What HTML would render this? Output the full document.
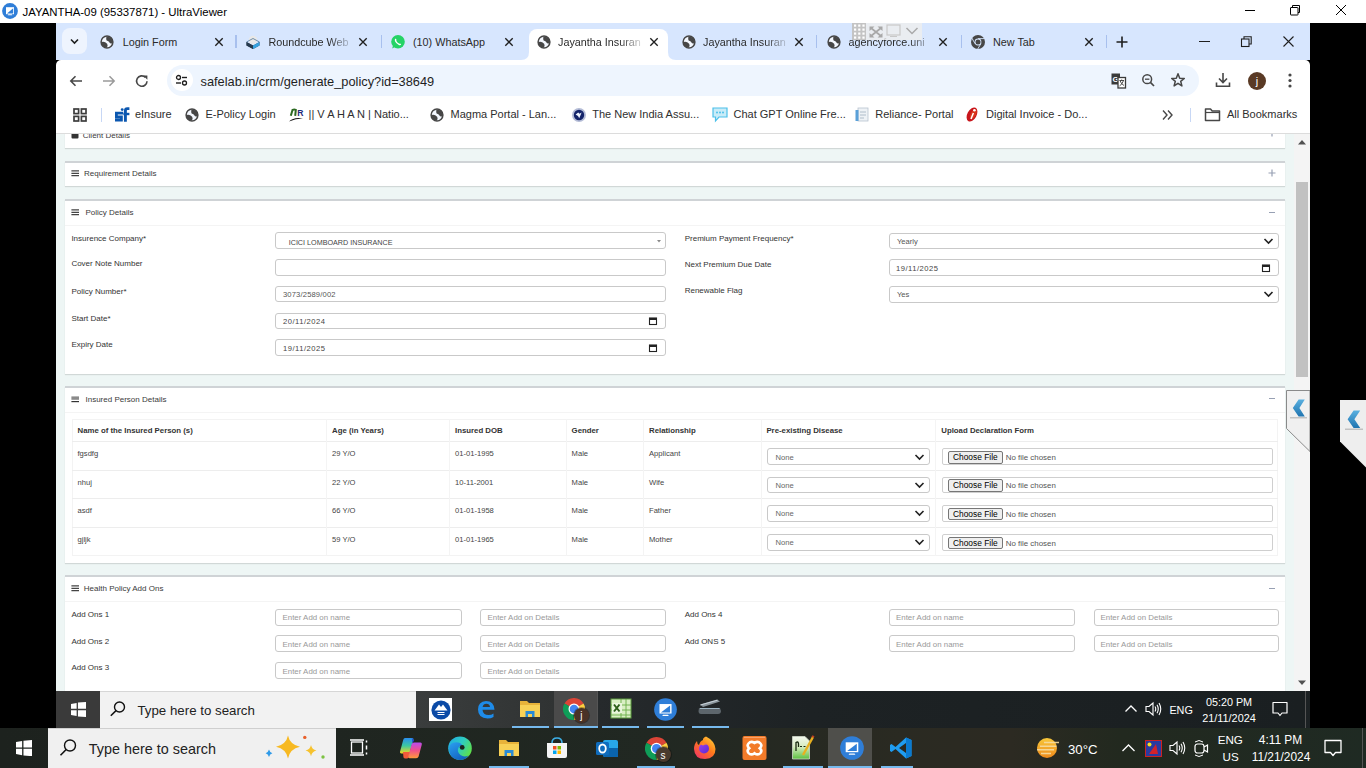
<!DOCTYPE html>
<html><head><meta charset="utf-8"><title>UltraViewer</title>
<style>
html,body{margin:0;padding:0;width:1366px;height:768px;overflow:hidden;background:#000;}
body{position:relative;font-family:"Liberation Sans", sans-serif;}
div,svg{font-family:"Liberation Sans", sans-serif;}
</style></head><body>
<div style="position:absolute;left:0px;top:0px;width:1366px;height:23px;background:#ffffff;"></div>
<svg style="position:absolute;left:2px;top:3px;" width="16" height="16" viewBox="0 0 16 16"><circle cx="8" cy="8" r="7.9" fill="#2f7ed8"/><rect x="4" y="4.2" width="8" height="7" fill="#fff"/><path d="M5 10.4 L11.2 5.2 V10.4 Z" fill="#2f7ed8"/><path d="M6.3 11.2 H9.7 L10.3 12.2 H5.7 Z" fill="#fff"/></svg>
<div style="position:absolute;left:22.5px;top:7.00px;font-size:11.4px;line-height:11.4px;color:#000;font-weight:400;white-space:nowrap;">JAYANTHA-09 (95337871) - UltraViewer</div>
<div style="position:absolute;left:1245px;top:9.6px;width:10px;height:1px;background:#000;"></div>
<svg style="position:absolute;left:1289px;top:4px;" width="13" height="13" viewBox="0 0 13 13"><rect x="1.5" y="3.5" width="7.5" height="7.5" fill="none" stroke="#000" stroke-width="1" rx="0.5"/><path d="M3.5 3.5 V1.5 H10.5 V8.5 H9" fill="none" stroke="#000" stroke-width="1"/></svg>
<svg style="position:absolute;left:1335px;top:4px;" width="12" height="12" viewBox="0 0 12 12"><path d="M1 1 L11 11 M11 1 L1 11" stroke="#000" stroke-width="1"/></svg>
<div style="position:absolute;left:0px;top:23px;width:1366px;height:705px;background:#000;"></div>
<div style="position:absolute;left:56px;top:23px;width:1254px;height:37px;background:#d7e6fe;"></div>
<div style="position:absolute;left:62px;top:28px;width:25px;height:26px;background:#eef4fe;border-radius:8px;"></div>
<svg style="position:absolute;left:68px;top:35px;" width="13" height="13" viewBox="0 0 13 13"><path d="M3 4.5 L6.5 8 L10 4.5" fill="none" stroke="#1f1f1f" stroke-width="1.6"/></svg>
<div style="position:absolute;left:529px;top:28.5px;width:139px;height:32px;background:#fff;border-radius:8px 8px 0 0;"></div>
<svg style="position:absolute;left:521px;top:50px;" width="8" height="10" viewBox="0 0 8 10"><path d="M0 10 Q8 10 8 2 V10 Z" fill="#fff"/></svg>
<svg style="position:absolute;left:668px;top:50px;" width="8" height="10" viewBox="0 0 8 10"><path d="M8 10 Q0 10 0 2 V10 Z" fill="#fff"/></svg>
<svg style="position:absolute;left:99px;top:33.5px;" width="16" height="16" viewBox="0 0 16 16"><circle cx="8" cy="8" r="5.9" fill="#f4f8ff" stroke="#474747" stroke-width="1.5"/><path d="M7.4 2.4 Q12.2 2.4 13.8 6.4 Q14 8.4 13.4 9.6 Q11.4 9.6 10.4 8.4 Q9.6 7 8.2 6.8 Q6.8 6.4 7.4 2.4Z" fill="#474747"/><path d="M2.2 8 Q4.8 7.4 6.6 8.4 Q8.6 9.6 8.6 11.2 Q8.4 12.8 7.6 13.8 Q3.6 13.2 2.4 9.8Z" fill="#474747"/></svg>
<div style="position:absolute;left:122.7px;top:37.00px;font-size:10.8px;line-height:10.8px;color:#2a2a2a;font-weight:400;white-space:nowrap;">Login Form</div>
<svg style="position:absolute;left:212.5px;top:35.5px;" width="12" height="12" viewBox="0 0 12 12"><path d="M2.3 2.3 L9.7 9.7 M9.7 2.3 L2.3 9.7" stroke="#1f1f1f" stroke-width="1.35"/></svg>
<svg style="position:absolute;left:245px;top:33.5px;" width="16" height="16" viewBox="0 0 16 16"><path d="M1.5 8 L8 11.5 L14.5 8 L14.5 11.5 L8 15 L1.5 11.5 Z" fill="#2c3e50"/><path d="M8 11.5 L14.5 8 L14.5 11.5 L8 15Z" fill="#37a2e0"/><path d="M1.5 8 L8 11.5 L8 15 L1.5 11.5Z" fill="#263a4e"/><circle cx="8" cy="6" r="4.2" fill="#e8e8e8"/><path d="M1.5 8 L8 4.5 L14.5 8" fill="none" stroke="#1f4f7a" stroke-width="0.6"/></svg>
<div style="position:absolute;left:268.4px;top:37.00px;font-size:10.8px;line-height:10.8px;color:#2a2a2a;font-weight:400;white-space:nowrap;-webkit-mask-image:linear-gradient(90deg,#000 70%,transparent 100%);width:87.0px;overflow:hidden;">Roundcube Web</div>
<svg style="position:absolute;left:357.4px;top:35.5px;" width="12" height="12" viewBox="0 0 12 12"><path d="M2.3 2.3 L9.7 9.7 M9.7 2.3 L2.3 9.7" stroke="#1f1f1f" stroke-width="1.35"/></svg>
<svg style="position:absolute;left:390px;top:33.5px;" width="16" height="16" viewBox="0 0 16 16"><circle cx="8" cy="7.8" r="6.8" fill="#25d366"/><path d="M2.2 14.6 L3.2 10.8 L5.4 12.8 Z" fill="#25d366"/><path d="M5.3 4.6 Q4.4 5.6 5 7.2 Q6.2 9.8 8.8 11 Q10.4 11.6 11.2 10.6 L10.2 9.4 Q9.6 9.8 9 9.5 Q7.2 8.6 6.4 6.9 Q6.2 6.3 6.6 5.8 Z" fill="#fff"/></svg>
<div style="position:absolute;left:413px;top:37.00px;font-size:10.8px;line-height:10.8px;color:#2a2a2a;font-weight:400;white-space:nowrap;">(10) WhatsApp</div>
<svg style="position:absolute;left:502.5px;top:35.5px;" width="12" height="12" viewBox="0 0 12 12"><path d="M2.3 2.3 L9.7 9.7 M9.7 2.3 L2.3 9.7" stroke="#1f1f1f" stroke-width="1.35"/></svg>
<svg style="position:absolute;left:535.6px;top:33.5px;" width="16" height="16" viewBox="0 0 16 16"><circle cx="8" cy="8" r="5.9" fill="#f4f8ff" stroke="#474747" stroke-width="1.5"/><path d="M7.4 2.4 Q12.2 2.4 13.8 6.4 Q14 8.4 13.4 9.6 Q11.4 9.6 10.4 8.4 Q9.6 7 8.2 6.8 Q6.8 6.4 7.4 2.4Z" fill="#474747"/><path d="M2.2 8 Q4.8 7.4 6.6 8.4 Q8.6 9.6 8.6 11.2 Q8.4 12.8 7.6 13.8 Q3.6 13.2 2.4 9.8Z" fill="#474747"/></svg>
<div style="position:absolute;left:558px;top:37.00px;font-size:10.8px;line-height:10.8px;color:#2a2a2a;font-weight:400;white-space:nowrap;-webkit-mask-image:linear-gradient(90deg,#000 70%,transparent 100%);width:87.60000000000002px;overflow:hidden;">Jayantha Insuran</div>
<svg style="position:absolute;left:647.6px;top:35.5px;" width="12" height="12" viewBox="0 0 12 12"><path d="M2.3 2.3 L9.7 9.7 M9.7 2.3 L2.3 9.7" stroke="#1f1f1f" stroke-width="1.35"/></svg>
<svg style="position:absolute;left:681px;top:33.5px;" width="16" height="16" viewBox="0 0 16 16"><circle cx="8" cy="8" r="5.9" fill="#f4f8ff" stroke="#474747" stroke-width="1.5"/><path d="M7.4 2.4 Q12.2 2.4 13.8 6.4 Q14 8.4 13.4 9.6 Q11.4 9.6 10.4 8.4 Q9.6 7 8.2 6.8 Q6.8 6.4 7.4 2.4Z" fill="#474747"/><path d="M2.2 8 Q4.8 7.4 6.6 8.4 Q8.6 9.6 8.6 11.2 Q8.4 12.8 7.6 13.8 Q3.6 13.2 2.4 9.8Z" fill="#474747"/></svg>
<div style="position:absolute;left:703px;top:37.00px;font-size:10.8px;line-height:10.8px;color:#2a2a2a;font-weight:400;white-space:nowrap;-webkit-mask-image:linear-gradient(90deg,#000 70%,transparent 100%);width:87.5px;overflow:hidden;">Jayantha Insuran</div>
<svg style="position:absolute;left:792.5px;top:35.5px;" width="12" height="12" viewBox="0 0 12 12"><path d="M2.3 2.3 L9.7 9.7 M9.7 2.3 L2.3 9.7" stroke="#1f1f1f" stroke-width="1.35"/></svg>
<svg style="position:absolute;left:825.5px;top:33.5px;" width="16" height="16" viewBox="0 0 16 16"><circle cx="8" cy="8" r="5.9" fill="#f4f8ff" stroke="#474747" stroke-width="1.5"/><path d="M7.4 2.4 Q12.2 2.4 13.8 6.4 Q14 8.4 13.4 9.6 Q11.4 9.6 10.4 8.4 Q9.6 7 8.2 6.8 Q6.8 6.4 7.4 2.4Z" fill="#474747"/><path d="M2.2 8 Q4.8 7.4 6.6 8.4 Q8.6 9.6 8.6 11.2 Q8.4 12.8 7.6 13.8 Q3.6 13.2 2.4 9.8Z" fill="#474747"/></svg>
<div style="position:absolute;left:848.4px;top:37.00px;font-size:10.8px;line-height:10.8px;color:#2a2a2a;font-weight:400;white-space:nowrap;-webkit-mask-image:linear-gradient(90deg,#000 70%,transparent 100%);width:87.0px;overflow:hidden;">agencyforce.uni</div>
<svg style="position:absolute;left:937.4px;top:35.5px;" width="12" height="12" viewBox="0 0 12 12"><path d="M2.3 2.3 L9.7 9.7 M9.7 2.3 L2.3 9.7" stroke="#1f1f1f" stroke-width="1.35"/></svg>
<svg style="position:absolute;left:970.4px;top:33.5px;" width="16" height="16" viewBox="0 0 16 16"><circle cx="8" cy="8" r="7" fill="#474747"/><circle cx="8" cy="8" r="3.4" fill="#d7e6fe"/><circle cx="8" cy="8" r="2.5" fill="#474747"/><path d="M8 4.6 L14.6 4.6" stroke="#d7e6fe" stroke-width="0.9"/><path d="M5.1 9.7 L1.7 3.8" stroke="#d7e6fe" stroke-width="0.9"/><path d="M10.9 9.7 L7.6 15.2" stroke="#d7e6fe" stroke-width="0.9"/></svg>
<div style="position:absolute;left:993px;top:37.00px;font-size:10.8px;line-height:10.8px;color:#2a2a2a;font-weight:400;white-space:nowrap;">New Tab</div>
<svg style="position:absolute;left:1082.5px;top:35.5px;" width="12" height="12" viewBox="0 0 12 12"><path d="M2.3 2.3 L9.7 9.7 M9.7 2.3 L2.3 9.7" stroke="#1f1f1f" stroke-width="1.35"/></svg>
<div style="position:absolute;left:235px;top:34.5px;width:1.5px;height:13.5px;background:#a8c0ee;"></div>
<div style="position:absolute;left:380.5px;top:34.5px;width:1.5px;height:13.5px;background:#a8c0ee;"></div>
<div style="position:absolute;left:815.5px;top:34.5px;width:1.5px;height:13.5px;background:#a8c0ee;"></div>
<div style="position:absolute;left:960.5px;top:34.5px;width:1.5px;height:13.5px;background:#a8c0ee;"></div>
<div style="position:absolute;left:1105.5px;top:34.5px;width:1.5px;height:13.5px;background:#a8c0ee;"></div>
<svg style="position:absolute;left:1115px;top:35px;" width="14" height="14" viewBox="0 0 14 14"><path d="M7 1.5 V12.5 M1.5 7 H12.5" stroke="#1f1f1f" stroke-width="1.6"/></svg>
<div style="position:absolute;left:1199px;top:41px;width:11px;height:1px;background:#1f1f1f;"></div>
<svg style="position:absolute;left:1240px;top:35px;" width="13" height="13" viewBox="0 0 13 13"><rect x="1.5" y="4" width="7.5" height="7.5" fill="none" stroke="#1f1f1f" stroke-width="1.1"/><path d="M4 4 V1.8 H11.2 V9 H9" fill="none" stroke="#1f1f1f" stroke-width="1.1"/></svg>
<svg style="position:absolute;left:1282px;top:35px;" width="13" height="13" viewBox="0 0 13 13"><path d="M1.5 1.5 L11.5 11.5 M11.5 1.5 L1.5 11.5" stroke="#1f1f1f" stroke-width="1.1"/></svg>
<div style="position:absolute;left:852px;top:23px;width:70px;height:17px;background:rgba(238,238,238,0.82);"></div>
<svg style="position:absolute;left:852px;top:23px;" width="14" height="17" viewBox="0 0 14 17"><rect x="0" y="0" width="14" height="17" fill="#c4c4c4"/><rect x="2.0" y="1.5" width="2.2" height="2.2" fill="#fff"/><rect x="6.2" y="1.5" width="2.2" height="2.2" fill="#fff"/><rect x="10.4" y="1.5" width="2.2" height="2.2" fill="#fff"/><rect x="2.0" y="5.5" width="2.2" height="2.2" fill="#fff"/><rect x="6.2" y="5.5" width="2.2" height="2.2" fill="#fff"/><rect x="10.4" y="5.5" width="2.2" height="2.2" fill="#fff"/><rect x="2.0" y="9.5" width="2.2" height="2.2" fill="#fff"/><rect x="6.2" y="9.5" width="2.2" height="2.2" fill="#fff"/><rect x="10.4" y="9.5" width="2.2" height="2.2" fill="#fff"/><rect x="2.0" y="13.5" width="2.2" height="2.2" fill="#fff"/><rect x="6.2" y="13.5" width="2.2" height="2.2" fill="#fff"/><rect x="10.4" y="13.5" width="2.2" height="2.2" fill="#fff"/></svg>
<svg style="position:absolute;left:868px;top:24.5px;" width="16" height="14" viewBox="0 0 16 14"><path d="M3 3 L13 11 M13 3 L3 11" stroke="#a8a8a8" stroke-width="1.7"/><path d="M1.5 1.5 H6.5 L1.5 6 Z M14.5 1.5 H9.5 L14.5 6 Z M1.5 12.5 H6.5 L1.5 8 Z M14.5 12.5 H9.5 L14.5 8 Z" fill="#a8a8a8"/></svg>
<svg style="position:absolute;left:886px;top:24px;" width="16" height="14" viewBox="0 0 16 14"><rect x="1" y="1" width="13" height="10" fill="none" stroke="#c8c8c8" stroke-width="1.2"/><path d="M4 12.5 H11" stroke="#c8c8c8" stroke-width="1"/></svg>
<svg style="position:absolute;left:905px;top:26px;" width="14" height="10" viewBox="0 0 14 10"><path d="M1.5 2 L7 7.5 L12.5 2" fill="none" stroke="#aaa" stroke-width="1.5"/></svg>
<div style="position:absolute;left:56px;top:60px;width:1254px;height:73px;background:#ffffff;border-radius:5px 5px 0 0;"></div>
<div style="position:absolute;left:56px;top:133px;width:1254px;height:1px;background:#dcdcdc;"></div>
<svg style="position:absolute;left:68px;top:73px;" width="16" height="16" viewBox="0 0 16 16"><path d="M14 8 H3 M7.5 3.2 L2.8 8 L7.5 12.8" fill="none" stroke="#474747" stroke-width="1.6"/></svg>
<svg style="position:absolute;left:101px;top:73px;" width="16" height="16" viewBox="0 0 16 16"><path d="M2 8 H13 M8.5 3.2 L13.2 8 L8.5 12.8" fill="none" stroke="#9a9a9a" stroke-width="1.5"/></svg>
<svg style="position:absolute;left:134px;top:73px;" width="16" height="16" viewBox="0 0 16 16"><path d="M13 8.2 A5.2 5.2 0 1 1 11.4 4.3" fill="none" stroke="#474747" stroke-width="1.6"/><path d="M9.2 2.6 H13.4 V6.8 Z" fill="#474747"/></svg>
<div style="position:absolute;left:167px;top:65px;width:1032px;height:31px;background:#eef5fe;border-radius:16px;"></div>
<div style="position:absolute;left:170.5px;top:69px;width:22px;height:22px;border-radius:11px;background:#fff;"></div>
<svg style="position:absolute;left:175px;top:74px;" width="14" height="13" viewBox="0 0 14 13"><circle cx="3.5" cy="3.5" r="2" fill="none" stroke="#1f1f1f" stroke-width="1.3"/><path d="M7 3.5 H12" stroke="#1f1f1f" stroke-width="1.4"/><circle cx="9.5" cy="9" r="2" fill="none" stroke="#1f1f1f" stroke-width="1.3"/><path d="M1 9 H6" stroke="#1f1f1f" stroke-width="1.4"/></svg>
<div style="position:absolute;left:200.5px;top:76.00px;font-size:12.8px;line-height:12.8px;color:#1f1f1f;font-weight:400;white-space:nowrap;">safelab.in/crm/generate_policy?id=38649</div>
<svg style="position:absolute;left:1110px;top:72px;" width="18" height="18" viewBox="0 0 18 18"><rect x="1.5" y="1.5" width="8.5" height="11" fill="#3a3a3a"/><text x="2.4" y="10" font-size="8" font-family="Liberation Sans" fill="#fff" font-weight="bold">G</text><rect x="8" y="5.5" width="7.5" height="10.5" fill="#fff" stroke="#3a3a3a" stroke-width="1.3"/><path d="M9.5 8.5 H14 M11.7 7.5 V8.5 M10 8.5 Q11 12 14 13.5 M13.5 8.5 Q12.5 12 9.5 14" fill="none" stroke="#3a3a3a" stroke-width="0.9"/></svg>
<svg style="position:absolute;left:1140px;top:72px;" width="17" height="17" viewBox="0 0 17 17"><circle cx="7.2" cy="7.2" r="4.4" fill="none" stroke="#474747" stroke-width="1.5"/><path d="M5 7.2 H9.4" stroke="#474747" stroke-width="1.3"/><path d="M10.4 10.4 L14 14" stroke="#474747" stroke-width="1.7"/></svg>
<svg style="position:absolute;left:1170px;top:72px;" width="16" height="16" viewBox="0 0 16 16"><path d="M8 1.8 L9.7 6.2 L14.3 6.4 L10.7 9.3 L11.9 13.9 L8 11.3 L4.1 13.9 L5.3 9.3 L1.7 6.4 L6.3 6.2 Z" fill="none" stroke="#474747" stroke-width="1.5" stroke-linejoin="round"/></svg>
<svg style="position:absolute;left:1214px;top:71px;" width="18" height="18" viewBox="0 0 18 18"><path d="M9 2 V11 M5 7.5 L9 11.5 L13 7.5" fill="none" stroke="#474747" stroke-width="1.6"/><path d="M2.5 11.5 V15.2 H15.5 V11.5" fill="none" stroke="#474747" stroke-width="1.6"/></svg>
<div style="position:absolute;left:1248px;top:71.5px;width:18px;height:18px;border-radius:9px;background:#5a3a25;"></div>
<div style="position:absolute;left:957px;width:600px;text-align:center;top:76.00px;font-size:11px;line-height:11px;color:#fff;font-weight:400;white-space:nowrap;">j</div>
<svg style="position:absolute;left:1286px;top:72px;" width="8" height="17" viewBox="0 0 8 17"><circle cx="4" cy="3" r="1.6" fill="#474747"/><circle cx="4" cy="8.5" r="1.6" fill="#474747"/><circle cx="4" cy="14" r="1.6" fill="#474747"/></svg>
<svg style="position:absolute;left:73px;top:108px;" width="14" height="14" viewBox="0 0 14 14"><rect x="1" y="1" width="4.6" height="4.6" fill="none" stroke="#3c3c3c" stroke-width="1.7"/><rect x="8.4" y="1" width="4.6" height="4.6" fill="none" stroke="#3c3c3c" stroke-width="1.7"/><rect x="1" y="8.4" width="4.6" height="4.6" fill="none" stroke="#3c3c3c" stroke-width="1.7"/><rect x="8.4" y="8.4" width="4.6" height="4.6" fill="none" stroke="#3c3c3c" stroke-width="1.7"/></svg>
<div style="position:absolute;left:100.5px;top:108px;width:1.3px;height:14px;background:#c7d7f5;"></div>
<svg style="position:absolute;left:114px;top:107px;" width="16" height="16" viewBox="0 0 16 16"><path d="M9.2 6.2 H2.4 V9.8 H7.4 V13 H1" fill="none" stroke="#0b57b0" stroke-width="2.8"/><path d="M11.4 14.8 V3.6 Q11.4 1.6 13.4 1.6 H15.4" fill="none" stroke="#0b57b0" stroke-width="2.9"/><path d="M9.4 7 H15.4" stroke="#0b57b0" stroke-width="2.4"/><circle cx="8.2" cy="2.6" r="1.4" fill="#0b57b0"/></svg>
<div style="position:absolute;left:134.9px;top:109.00px;font-size:11px;line-height:11px;color:#2e2e2e;font-weight:400;white-space:nowrap;">eInsure</div>
<svg style="position:absolute;left:184.4px;top:106.5px;" width="16" height="16" viewBox="0 0 16 16"><circle cx="8" cy="8" r="5.9" fill="#f4f8ff" stroke="#474747" stroke-width="1.5"/><path d="M7.4 2.4 Q12.2 2.4 13.8 6.4 Q14 8.4 13.4 9.6 Q11.4 9.6 10.4 8.4 Q9.6 7 8.2 6.8 Q6.8 6.4 7.4 2.4Z" fill="#474747"/><path d="M2.2 8 Q4.8 7.4 6.6 8.4 Q8.6 9.6 8.6 11.2 Q8.4 12.8 7.6 13.8 Q3.6 13.2 2.4 9.8Z" fill="#474747"/></svg>
<div style="position:absolute;left:205.4px;top:109.00px;font-size:11px;line-height:11px;color:#2e2e2e;font-weight:400;white-space:nowrap;">E-Policy Login</div>
<svg style="position:absolute;left:287px;top:107px;" width="18" height="16" viewBox="0 0 18 16"><path d="M3.8 8.8 L5.6 2.8 Q7.2 2 8.8 2.8 L8.2 8.8" fill="none" stroke="#2d6a22" stroke-width="2"/><text x="10.2" y="9.2" font-size="8.6" font-family="Liberation Sans" font-weight="bold" fill="#1c2a7a">R</text><path d="M2 14.6 Q6.5 9.8 16 11.4 Q8.5 11.4 2 14.6 Z" fill="#111"/></svg>
<div style="position:absolute;left:308.6px;top:109.00px;font-size:11px;line-height:11px;color:#2e2e2e;font-weight:400;white-space:nowrap;">|| V A H A N | Natio...</div>
<svg style="position:absolute;left:428.8px;top:106.5px;" width="16" height="16" viewBox="0 0 16 16"><circle cx="8" cy="8" r="5.9" fill="#f4f8ff" stroke="#474747" stroke-width="1.5"/><path d="M7.4 2.4 Q12.2 2.4 13.8 6.4 Q14 8.4 13.4 9.6 Q11.4 9.6 10.4 8.4 Q9.6 7 8.2 6.8 Q6.8 6.4 7.4 2.4Z" fill="#474747"/><path d="M2.2 8 Q4.8 7.4 6.6 8.4 Q8.6 9.6 8.6 11.2 Q8.4 12.8 7.6 13.8 Q3.6 13.2 2.4 9.8Z" fill="#474747"/></svg>
<div style="position:absolute;left:450.5px;top:109.00px;font-size:11px;line-height:11px;color:#2e2e2e;font-weight:400;white-space:nowrap;">Magma Portal - Lan...</div>
<svg style="position:absolute;left:571px;top:107px;" width="16" height="16" viewBox="0 0 16 16"><circle cx="8" cy="8" r="7" fill="#b4bcd6"/><circle cx="8" cy="8" r="5.2" fill="#14246a"/><path d="M4.6 7.6 Q6 6.4 7.2 5.6 L8.6 6.8 L10.6 5.6 L9.4 8.4 L8.2 11.2 L7 9 Z" fill="#eef4ff"/></svg>
<div style="position:absolute;left:592.2px;top:109.00px;font-size:11px;line-height:11px;color:#2e2e2e;font-weight:400;white-space:nowrap;">The New India Assu...</div>
<svg style="position:absolute;left:711px;top:106px;" width="18" height="17" viewBox="0 0 18 17"><path d="M2 2 H16 V11 H8 L4.5 15 V11 H2 Z" fill="#c9ecf8" stroke="#4cc0ea" stroke-width="1.2"/><circle cx="6" cy="6.5" r="1" fill="#4cc0ea"/><circle cx="9" cy="6.5" r="1" fill="#4cc0ea"/><circle cx="12" cy="6.5" r="1" fill="#4cc0ea"/></svg>
<div style="position:absolute;left:733.5px;top:109.00px;font-size:11px;line-height:11px;color:#2e2e2e;font-weight:400;white-space:nowrap;">Chat GPT Online Fre...</div>
<svg style="position:absolute;left:854px;top:106px;" width="16" height="17" viewBox="0 0 16 17"><rect x="4" y="2" width="10" height="13" fill="#eef2f6" stroke="#b7c3cf" stroke-width="0.8"/><rect x="1.5" y="4" width="3" height="11" fill="#5aa0d8"/><path d="M6 6 H12 M6 9 H12 M6 12 H10" stroke="#9fb0c0" stroke-width="0.8"/></svg>
<div style="position:absolute;left:875.2px;top:109.00px;font-size:11px;line-height:11px;color:#2e2e2e;font-weight:400;white-space:nowrap;">Reliance- Portal</div>
<svg style="position:absolute;left:964px;top:106px;" width="16" height="17" viewBox="0 0 16 17"><g transform="rotate(28 8 8.5)"><ellipse cx="8" cy="8.5" rx="4.6" ry="7.6" fill="#c8161c"/><ellipse cx="9" cy="7.5" rx="2.6" ry="5.6" fill="#e8501c" opacity="0.55"/></g><circle cx="10.4" cy="4.2" r="1.3" fill="#fff"/><path d="M9.4 7 L7 13" stroke="#fff" stroke-width="1.5"/></svg>
<div style="position:absolute;left:986px;top:109.00px;font-size:11px;line-height:11px;color:#2e2e2e;font-weight:400;white-space:nowrap;">Digital Invoice - Do...</div>
<svg style="position:absolute;left:1161px;top:108px;" width="14" height="14" viewBox="0 0 14 14"><path d="M2 2.5 L6 7 L2 11.5 M7 2.5 L11 7 L7 11.5" fill="none" stroke="#474747" stroke-width="1.4"/></svg>
<div style="position:absolute;left:1189.5px;top:108px;width:1.3px;height:14px;background:#c7d7f5;"></div>
<svg style="position:absolute;left:1204px;top:107px;" width="17" height="15" viewBox="0 0 17 15"><path d="M1.5 2 H6.5 L8.2 4 H15.5 V13.5 H1.5 Z" fill="none" stroke="#474747" stroke-width="1.5" stroke-linejoin="round"/><path d="M1.5 5.5 H15.5" stroke="#474747" stroke-width="1.2"/></svg>
<div style="position:absolute;left:1227px;top:109.00px;font-size:11px;line-height:11px;color:#2e2e2e;font-weight:400;white-space:nowrap;">All Bookmarks</div>
<div style="position:absolute;left:56px;top:134px;width:1238px;height:557px;background:#eef6f5;overflow:hidden;">
<div style="position:absolute;left:9px;top:-14px;width:1220px;height:28px;background:#fff;box-shadow:0 1px 1px rgba(0,0,0,0.12);"></div>
<div style="position:absolute;left:26.799999999999997px;top:-2.00px;font-size:8px;line-height:8px;color:#3a3a3a;font-weight:400;white-space:nowrap;">Client Details</div>
<svg style="position:absolute;left:15px;top:-2px;" width="9" height="7" viewBox="0 0 9 7"><rect x="0.5" y="1.5" width="7" height="5" rx="1" fill="#333"/></svg>
<svg style="position:absolute;left:1212px;top:-5px;" width="8" height="8" viewBox="0 0 8 8"><path d="M4 0.5 V7.5 M0.5 4 H7.5" stroke="#97a0b3" stroke-width="1.2"/></svg>
<div style="position:absolute;left:9px;top:27px;width:1220px;height:25px;background:#fff;box-shadow:0 1px 1px rgba(0,0,0,0.12);"></div>
<div style="position:absolute;left:9px;top:27px;width:1220px;height:2px;background:#cfd3d6;"></div>
<svg style="position:absolute;left:15px;top:35.19999999999999px;" width="9" height="8" viewBox="0 0 9 8"><path d="M0.4 1.9 H8 M0.4 4.3 H8 M0.4 6.7 H8" stroke="#444" stroke-width="1.25"/></svg>
<div style="position:absolute;left:28px;top:36.00px;font-size:8px;line-height:8px;color:#3a3a3a;font-weight:400;white-space:nowrap;">Requirement Details</div>
<svg style="position:absolute;left:1212px;top:35.19999999999999px;" width="8" height="8" viewBox="0 0 8 8"><path d="M4 0.5 V7.5 M0.5 4 H7.5" stroke="#97a0b3" stroke-width="1.2"/></svg>
<div style="position:absolute;left:9px;top:65px;width:1220px;height:175px;background:#fff;box-shadow:0 1px 1px rgba(0,0,0,0.12);"></div>
<div style="position:absolute;left:9px;top:65px;width:1220px;height:2px;background:#cfd3d6;"></div>
<svg style="position:absolute;left:15px;top:74.19999999999999px;" width="9" height="8" viewBox="0 0 9 8"><path d="M0.4 1.9 H8 M0.4 4.3 H8 M0.4 6.7 H8" stroke="#444" stroke-width="1.25"/></svg>
<div style="position:absolute;left:29.5px;top:75.00px;font-size:8px;line-height:8px;color:#3a3a3a;font-weight:400;white-space:nowrap;">Policy Details</div>
<div style="position:absolute;left:1213px;top:77.69999999999999px;width:6px;height:1.2px;background:#97a0b3;"></div>
<div style="position:absolute;left:9px;top:91px;width:1220px;height:1px;background:#f4f4f4;"></div>
<div style="position:absolute;left:15.400000000000006px;top:101.00px;font-size:8px;line-height:8px;color:#333;font-weight:400;white-space:nowrap;">Insurence Company*</div>
<div style="position:absolute;left:15.400000000000006px;top:126.00px;font-size:8px;line-height:8px;color:#333;font-weight:400;white-space:nowrap;">Cover Note Number</div>
<div style="position:absolute;left:15.400000000000006px;top:154.00px;font-size:8px;line-height:8px;color:#333;font-weight:400;white-space:nowrap;">Policy Number*</div>
<div style="position:absolute;left:15.400000000000006px;top:181.00px;font-size:8px;line-height:8px;color:#333;font-weight:400;white-space:nowrap;">Start Date*</div>
<div style="position:absolute;left:15.400000000000006px;top:207.00px;font-size:8px;line-height:8px;color:#333;font-weight:400;white-space:nowrap;">Expiry Date</div>
<div style="position:absolute;left:219px;top:98.30000000000001px;width:391px;height:16.5px;box-sizing:border-box;background:#fff;border:1px solid #c9c9c9;border-radius:3px;"></div>
<div style="position:absolute;left:232.7px;top:105.00px;font-size:7.2px;line-height:7.2px;color:#444;font-weight:400;white-space:nowrap;">ICICI LOMBOARD INSURANCE</div>
<svg style="position:absolute;left:600px;top:103.55000000000001px;" width="6" height="6" viewBox="0 0 6 6"><path d="M1 2 L3 4.5 L5 2 Z" fill="#888"/></svg>
<div style="position:absolute;left:219px;top:124.5px;width:391px;height:17.3px;box-sizing:border-box;background:#fff;border:1px solid #c9c9c9;border-radius:3px;"></div>
<div style="position:absolute;left:219px;top:151.60000000000002px;width:391px;height:16.8px;box-sizing:border-box;background:#fff;border:1px solid #c9c9c9;border-radius:3px;"></div>
<div style="position:absolute;left:227px;top:157.00px;font-size:7.6px;line-height:7.6px;color:#555;font-weight:400;white-space:nowrap;letter-spacing:0.15px;">3073/2589/002</div>
<div style="position:absolute;left:219px;top:178.5px;width:391px;height:16.9px;box-sizing:border-box;background:#fff;border:1px solid #c9c9c9;border-radius:3px;"></div>
<div style="position:absolute;left:227px;top:184.00px;font-size:7.6px;line-height:7.6px;color:#444;font-weight:400;white-space:nowrap;letter-spacing:0.5px;">20/11/2024</div>
<svg style="position:absolute;left:592px;top:181.95px;" width="10" height="10" viewBox="0 0 10 10"><rect x="1.5" y="2" width="7" height="6.5" fill="none" stroke="#222" stroke-width="1.1"/><rect x="1.5" y="2" width="7" height="2" fill="#222"/></svg>
<div style="position:absolute;left:219px;top:205.3px;width:391px;height:16.9px;box-sizing:border-box;background:#fff;border:1px solid #c9c9c9;border-radius:3px;"></div>
<div style="position:absolute;left:227px;top:211.00px;font-size:7.6px;line-height:7.6px;color:#444;font-weight:400;white-space:nowrap;letter-spacing:0.5px;">19/11/2025</div>
<svg style="position:absolute;left:592px;top:208.75px;" width="10" height="10" viewBox="0 0 10 10"><rect x="1.5" y="2" width="7" height="6.5" fill="none" stroke="#222" stroke-width="1.1"/><rect x="1.5" y="2" width="7" height="2" fill="#222"/></svg>
<div style="position:absolute;left:628.7px;top:101.00px;font-size:8px;line-height:8px;color:#333;font-weight:400;white-space:nowrap;">Premium Payment Frequency*</div>
<div style="position:absolute;left:628.7px;top:127.00px;font-size:8px;line-height:8px;color:#333;font-weight:400;white-space:nowrap;">Next Premium Due Date</div>
<div style="position:absolute;left:628.7px;top:153.00px;font-size:8px;line-height:8px;color:#333;font-weight:400;white-space:nowrap;">Renewable Flag</div>
<div style="position:absolute;left:833px;top:98.6px;width:390px;height:16.6px;box-sizing:border-box;background:#fff;border:1px solid #c9c9c9;border-radius:3px;"></div>
<div style="position:absolute;left:841px;top:104.00px;font-size:7.6px;line-height:7.6px;color:#555;font-weight:400;white-space:nowrap;">Yearly</div>
<svg style="position:absolute;left:1207px;top:101.9px;" width="11" height="10" viewBox="0 0 11 10"><path d="M1.5 3 L5.5 7 L9.5 3" fill="none" stroke="#222" stroke-width="1.6"/></svg>
<div style="position:absolute;left:833px;top:125.39999999999998px;width:390px;height:16.6px;box-sizing:border-box;background:#fff;border:1px solid #c9c9c9;border-radius:3px;"></div>
<div style="position:absolute;left:840px;top:131.00px;font-size:7.6px;line-height:7.6px;color:#444;font-weight:400;white-space:nowrap;letter-spacing:0.5px;">19/11/2025</div>
<svg style="position:absolute;left:1205px;top:128.7px;" width="10" height="10" viewBox="0 0 10 10"><rect x="1.5" y="2" width="7" height="6.5" fill="none" stroke="#222" stroke-width="1.1"/><rect x="1.5" y="2" width="7" height="2" fill="#222"/></svg>
<div style="position:absolute;left:833px;top:152px;width:390px;height:16.9px;box-sizing:border-box;background:#fff;border:1px solid #c9c9c9;border-radius:3px;"></div>
<div style="position:absolute;left:841px;top:157.00px;font-size:7.6px;line-height:7.6px;color:#555;font-weight:400;white-space:nowrap;">Yes</div>
<svg style="position:absolute;left:1207px;top:155.45px;" width="11" height="10" viewBox="0 0 11 10"><path d="M1.5 3 L5.5 7 L9.5 3" fill="none" stroke="#222" stroke-width="1.6"/></svg>
<div style="position:absolute;left:9px;top:252px;width:1220px;height:177px;background:#fff;box-shadow:0 1px 1px rgba(0,0,0,0.12);"></div>
<div style="position:absolute;left:9px;top:252px;width:1220px;height:2px;background:#cfd3d6;"></div>
<svg style="position:absolute;left:15px;top:260.8px;" width="9" height="8" viewBox="0 0 9 8"><rect x="0.4" y="1.4" width="7.6" height="3.4" fill="#8a8a8a"/><path d="M0.4 6.6 H8" stroke="#333" stroke-width="1.2"/></svg>
<div style="position:absolute;left:29.5px;top:262.00px;font-size:8px;line-height:8px;color:#3a3a3a;font-weight:400;white-space:nowrap;">Insured Person Details</div>
<div style="position:absolute;left:1213px;top:264.3px;width:6px;height:1.2px;background:#97a0b3;"></div>
<div style="position:absolute;left:9px;top:278px;width:1220px;height:1px;background:#f4f4f4;"></div>
<div style="position:absolute;left:15.700000000000003px;top:285px;width:1206.3px;height:136.5px;box-sizing:border-box;border:1px solid #f3f3f3;"></div>
<div style="position:absolute;left:15.700000000000003px;top:307px;width:1206.3px;height:1px;background:#ededed;"></div>
<div style="position:absolute;left:15.700000000000003px;top:336px;width:1206.3px;height:1px;background:#ededed;"></div>
<div style="position:absolute;left:15.700000000000003px;top:364px;width:1206.3px;height:1px;background:#ededed;"></div>
<div style="position:absolute;left:15.700000000000003px;top:393px;width:1206.3px;height:1px;background:#ededed;"></div>
<div style="position:absolute;left:270.3px;top:285px;width:1px;height:136.5px;background:#f4f4f4;"></div>
<div style="position:absolute;left:393.4px;top:285px;width:1px;height:136.5px;background:#f4f4f4;"></div>
<div style="position:absolute;left:510.4px;top:285px;width:1px;height:136.5px;background:#f4f4f4;"></div>
<div style="position:absolute;left:587px;top:285px;width:1px;height:136.5px;background:#f4f4f4;"></div>
<div style="position:absolute;left:704.5px;top:285px;width:1px;height:136.5px;background:#f4f4f4;"></div>
<div style="position:absolute;left:879.4px;top:285px;width:1px;height:136.5px;background:#f4f4f4;"></div>
<div style="position:absolute;left:21.5px;top:293.00px;font-size:7.8px;line-height:7.8px;color:#333;font-weight:700;white-space:nowrap;">Name of the Insured Person (s)</div>
<div style="position:absolute;left:276px;top:293.00px;font-size:7.8px;line-height:7.8px;color:#333;font-weight:700;white-space:nowrap;">Age (in Years)</div>
<div style="position:absolute;left:399px;top:293.00px;font-size:7.8px;line-height:7.8px;color:#333;font-weight:700;white-space:nowrap;">Insured DOB</div>
<div style="position:absolute;left:515.6px;top:293.00px;font-size:7.8px;line-height:7.8px;color:#333;font-weight:700;white-space:nowrap;">Gender</div>
<div style="position:absolute;left:593px;top:293.00px;font-size:7.8px;line-height:7.8px;color:#333;font-weight:700;white-space:nowrap;">Relationship</div>
<div style="position:absolute;left:710.4px;top:293.00px;font-size:7.8px;line-height:7.8px;color:#333;font-weight:700;white-space:nowrap;">Pre-existing Disease</div>
<div style="position:absolute;left:885.3px;top:293.00px;font-size:7.8px;line-height:7.8px;color:#333;font-weight:700;white-space:nowrap;">Upload Declaration Form</div>
<div style="position:absolute;left:21.5px;top:316.00px;font-size:7.6px;line-height:7.6px;color:#444;font-weight:400;white-space:nowrap;">fgsdfg</div>
<div style="position:absolute;left:276px;top:316.00px;font-size:7.6px;line-height:7.6px;color:#444;font-weight:400;white-space:nowrap;">29 Y/O</div>
<div style="position:absolute;left:399px;top:316.00px;font-size:7.6px;line-height:7.6px;color:#444;font-weight:400;white-space:nowrap;">01-01-1995</div>
<div style="position:absolute;left:515.6px;top:316.00px;font-size:7.6px;line-height:7.6px;color:#444;font-weight:400;white-space:nowrap;">Male</div>
<div style="position:absolute;left:593px;top:316.00px;font-size:7.6px;line-height:7.6px;color:#444;font-weight:400;white-space:nowrap;">Applicant</div>
<div style="position:absolute;left:710.7px;top:314.4px;width:163.69999999999993px;height:16.8px;box-sizing:border-box;background:#fff;border:1px solid #c9c9c9;border-radius:3px;"></div>
<div style="position:absolute;left:719.5px;top:320.00px;font-size:7.6px;line-height:7.6px;color:#666;font-weight:400;white-space:nowrap;">None</div>
<svg style="position:absolute;left:858.4px;top:317.79999999999995px;" width="11" height="10" viewBox="0 0 11 10"><path d="M1.5 3 L5.5 7 L9.5 3" fill="none" stroke="#222" stroke-width="1.6"/></svg>
<div style="position:absolute;left:885.8px;top:314.4px;width:331.20000000000005px;height:16.6px;box-sizing:border-box;background:#fff;border:1px solid #cfcfcf;border-radius:2px;"></div>
<div style="position:absolute;left:892.1px;top:317.2px;width:54.89999999999998px;height:12.4px;box-sizing:border-box;background:#efefef;border:1px solid #767676;border-radius:2px;"></div>
<div style="position:absolute;left:897px;top:319.00px;font-size:8.4px;line-height:8.4px;color:#000;font-weight:400;white-space:nowrap;">Choose File</div>
<div style="position:absolute;left:949.8px;top:320.00px;font-size:7.9px;line-height:7.9px;color:#555;font-weight:400;white-space:nowrap;">No file chosen</div>
<div style="position:absolute;left:21.5px;top:345.00px;font-size:7.6px;line-height:7.6px;color:#444;font-weight:400;white-space:nowrap;">nhuj</div>
<div style="position:absolute;left:276px;top:345.00px;font-size:7.6px;line-height:7.6px;color:#444;font-weight:400;white-space:nowrap;">22 Y/O</div>
<div style="position:absolute;left:399px;top:345.00px;font-size:7.6px;line-height:7.6px;color:#444;font-weight:400;white-space:nowrap;">10-11-2001</div>
<div style="position:absolute;left:515.6px;top:345.00px;font-size:7.6px;line-height:7.6px;color:#444;font-weight:400;white-space:nowrap;">Male</div>
<div style="position:absolute;left:593px;top:345.00px;font-size:7.6px;line-height:7.6px;color:#444;font-weight:400;white-space:nowrap;">Wife</div>
<div style="position:absolute;left:710.7px;top:342.6px;width:163.69999999999993px;height:16.8px;box-sizing:border-box;background:#fff;border:1px solid #c9c9c9;border-radius:3px;"></div>
<div style="position:absolute;left:719.5px;top:348.00px;font-size:7.6px;line-height:7.6px;color:#666;font-weight:400;white-space:nowrap;">None</div>
<svg style="position:absolute;left:858.4px;top:346.0px;" width="11" height="10" viewBox="0 0 11 10"><path d="M1.5 3 L5.5 7 L9.5 3" fill="none" stroke="#222" stroke-width="1.6"/></svg>
<div style="position:absolute;left:885.8px;top:342.6px;width:331.20000000000005px;height:16.6px;box-sizing:border-box;background:#fff;border:1px solid #cfcfcf;border-radius:2px;"></div>
<div style="position:absolute;left:892.1px;top:345.40000000000003px;width:54.89999999999998px;height:12.4px;box-sizing:border-box;background:#efefef;border:1px solid #767676;border-radius:2px;"></div>
<div style="position:absolute;left:897px;top:347.00px;font-size:8.4px;line-height:8.4px;color:#000;font-weight:400;white-space:nowrap;">Choose File</div>
<div style="position:absolute;left:949.8px;top:348.00px;font-size:7.9px;line-height:7.9px;color:#555;font-weight:400;white-space:nowrap;">No file chosen</div>
<div style="position:absolute;left:21.5px;top:373.00px;font-size:7.6px;line-height:7.6px;color:#444;font-weight:400;white-space:nowrap;">asdf</div>
<div style="position:absolute;left:276px;top:373.00px;font-size:7.6px;line-height:7.6px;color:#444;font-weight:400;white-space:nowrap;">66 Y/O</div>
<div style="position:absolute;left:399px;top:373.00px;font-size:7.6px;line-height:7.6px;color:#444;font-weight:400;white-space:nowrap;">01-01-1958</div>
<div style="position:absolute;left:515.6px;top:373.00px;font-size:7.6px;line-height:7.6px;color:#444;font-weight:400;white-space:nowrap;">Male</div>
<div style="position:absolute;left:593px;top:373.00px;font-size:7.6px;line-height:7.6px;color:#444;font-weight:400;white-space:nowrap;">Father</div>
<div style="position:absolute;left:710.7px;top:371.0px;width:163.69999999999993px;height:16.8px;box-sizing:border-box;background:#fff;border:1px solid #c9c9c9;border-radius:3px;"></div>
<div style="position:absolute;left:719.5px;top:376.00px;font-size:7.6px;line-height:7.6px;color:#666;font-weight:400;white-space:nowrap;">None</div>
<svg style="position:absolute;left:858.4px;top:374.4px;" width="11" height="10" viewBox="0 0 11 10"><path d="M1.5 3 L5.5 7 L9.5 3" fill="none" stroke="#222" stroke-width="1.6"/></svg>
<div style="position:absolute;left:885.8px;top:371.0px;width:331.20000000000005px;height:16.6px;box-sizing:border-box;background:#fff;border:1px solid #cfcfcf;border-radius:2px;"></div>
<div style="position:absolute;left:892.1px;top:373.8px;width:54.89999999999998px;height:12.4px;box-sizing:border-box;background:#efefef;border:1px solid #767676;border-radius:2px;"></div>
<div style="position:absolute;left:897px;top:376.00px;font-size:8.4px;line-height:8.4px;color:#000;font-weight:400;white-space:nowrap;">Choose File</div>
<div style="position:absolute;left:949.8px;top:377.00px;font-size:7.9px;line-height:7.9px;color:#555;font-weight:400;white-space:nowrap;">No file chosen</div>
<div style="position:absolute;left:21.5px;top:402.00px;font-size:7.6px;line-height:7.6px;color:#444;font-weight:400;white-space:nowrap;">gjljk</div>
<div style="position:absolute;left:276px;top:402.00px;font-size:7.6px;line-height:7.6px;color:#444;font-weight:400;white-space:nowrap;">59 Y/O</div>
<div style="position:absolute;left:399px;top:402.00px;font-size:7.6px;line-height:7.6px;color:#444;font-weight:400;white-space:nowrap;">01-01-1965</div>
<div style="position:absolute;left:515.6px;top:402.00px;font-size:7.6px;line-height:7.6px;color:#444;font-weight:400;white-space:nowrap;">Male</div>
<div style="position:absolute;left:593px;top:402.00px;font-size:7.6px;line-height:7.6px;color:#444;font-weight:400;white-space:nowrap;">Mother</div>
<div style="position:absolute;left:710.7px;top:400.0px;width:163.69999999999993px;height:16.8px;box-sizing:border-box;background:#fff;border:1px solid #c9c9c9;border-radius:3px;"></div>
<div style="position:absolute;left:719.5px;top:405.00px;font-size:7.6px;line-height:7.6px;color:#666;font-weight:400;white-space:nowrap;">None</div>
<svg style="position:absolute;left:858.4px;top:403.4px;" width="11" height="10" viewBox="0 0 11 10"><path d="M1.5 3 L5.5 7 L9.5 3" fill="none" stroke="#222" stroke-width="1.6"/></svg>
<div style="position:absolute;left:885.8px;top:400.0px;width:331.20000000000005px;height:16.6px;box-sizing:border-box;background:#fff;border:1px solid #cfcfcf;border-radius:2px;"></div>
<div style="position:absolute;left:892.1px;top:402.79999999999995px;width:54.89999999999998px;height:12.4px;box-sizing:border-box;background:#efefef;border:1px solid #767676;border-radius:2px;"></div>
<div style="position:absolute;left:897px;top:405.00px;font-size:8.4px;line-height:8.4px;color:#000;font-weight:400;white-space:nowrap;">Choose File</div>
<div style="position:absolute;left:949.8px;top:406.00px;font-size:7.9px;line-height:7.9px;color:#555;font-weight:400;white-space:nowrap;">No file chosen</div>
<div style="position:absolute;left:9px;top:441px;width:1220px;height:125px;background:#fff;box-shadow:0 1px 1px rgba(0,0,0,0.12);"></div>
<div style="position:absolute;left:9px;top:441px;width:1220px;height:2px;background:#cfd3d6;"></div>
<svg style="position:absolute;left:15px;top:450.20000000000005px;" width="9" height="8" viewBox="0 0 9 8"><path d="M0.4 1.9 H8 M0.4 4.3 H8 M0.4 6.7 H8" stroke="#444" stroke-width="1.25"/></svg>
<div style="position:absolute;left:27.799999999999997px;top:451.00px;font-size:8px;line-height:8px;color:#3a3a3a;font-weight:400;white-space:nowrap;">Health Policy Add Ons</div>
<div style="position:absolute;left:1213px;top:453.70000000000005px;width:6px;height:1.2px;background:#97a0b3;"></div>
<div style="position:absolute;left:9px;top:467px;width:1220px;height:1px;background:#f4f4f4;"></div>
<div style="position:absolute;left:15.400000000000006px;top:477.00px;font-size:8px;line-height:8px;color:#333;font-weight:400;white-space:nowrap;">Add Ons 1</div>
<div style="position:absolute;left:15.400000000000006px;top:504.00px;font-size:8px;line-height:8px;color:#333;font-weight:400;white-space:nowrap;">Add Ons 2</div>
<div style="position:absolute;left:15.400000000000006px;top:530.00px;font-size:8px;line-height:8px;color:#333;font-weight:400;white-space:nowrap;">Add Ons 3</div>
<div style="position:absolute;left:628.7px;top:477.00px;font-size:8px;line-height:8px;color:#333;font-weight:400;white-space:nowrap;">Add Ons 4</div>
<div style="position:absolute;left:628.7px;top:504.00px;font-size:8px;line-height:8px;color:#333;font-weight:400;white-space:nowrap;">Add ONS 5</div>
<div style="position:absolute;left:219px;top:475.0px;width:186.5px;height:17px;box-sizing:border-box;background:#fff;border:1px solid #c9c9c9;border-radius:3px;"></div>
<div style="position:absolute;left:226.5px;top:480.00px;font-size:7.9px;line-height:7.9px;color:#999;font-weight:400;white-space:nowrap;">Enter Add on name</div>
<div style="position:absolute;left:424.4px;top:475.0px;width:185.60000000000002px;height:17px;box-sizing:border-box;background:#fff;border:1px solid #c9c9c9;border-radius:3px;"></div>
<div style="position:absolute;left:431.5px;top:480.00px;font-size:7.9px;line-height:7.9px;color:#999;font-weight:400;white-space:nowrap;">Enter Add on Details</div>
<div style="position:absolute;left:833px;top:475.0px;width:186px;height:17px;box-sizing:border-box;background:#fff;border:1px solid #c9c9c9;border-radius:3px;"></div>
<div style="position:absolute;left:840px;top:480.00px;font-size:7.9px;line-height:7.9px;color:#999;font-weight:400;white-space:nowrap;">Enter Add on name</div>
<div style="position:absolute;left:1037.6px;top:475.0px;width:185.4000000000001px;height:17px;box-sizing:border-box;background:#fff;border:1px solid #c9c9c9;border-radius:3px;"></div>
<div style="position:absolute;left:1044.5px;top:480.00px;font-size:7.9px;line-height:7.9px;color:#999;font-weight:400;white-space:nowrap;">Enter Add on Details</div>
<div style="position:absolute;left:219px;top:501.4px;width:186.5px;height:17px;box-sizing:border-box;background:#fff;border:1px solid #c9c9c9;border-radius:3px;"></div>
<div style="position:absolute;left:226.5px;top:507.00px;font-size:7.9px;line-height:7.9px;color:#999;font-weight:400;white-space:nowrap;">Enter Add on name</div>
<div style="position:absolute;left:424.4px;top:501.4px;width:185.60000000000002px;height:17px;box-sizing:border-box;background:#fff;border:1px solid #c9c9c9;border-radius:3px;"></div>
<div style="position:absolute;left:431.5px;top:507.00px;font-size:7.9px;line-height:7.9px;color:#999;font-weight:400;white-space:nowrap;">Enter Add on Details</div>
<div style="position:absolute;left:833px;top:501.4px;width:186px;height:17px;box-sizing:border-box;background:#fff;border:1px solid #c9c9c9;border-radius:3px;"></div>
<div style="position:absolute;left:840px;top:507.00px;font-size:7.9px;line-height:7.9px;color:#999;font-weight:400;white-space:nowrap;">Enter Add on name</div>
<div style="position:absolute;left:1037.6px;top:501.4px;width:185.4000000000001px;height:17px;box-sizing:border-box;background:#fff;border:1px solid #c9c9c9;border-radius:3px;"></div>
<div style="position:absolute;left:1044.5px;top:507.00px;font-size:7.9px;line-height:7.9px;color:#999;font-weight:400;white-space:nowrap;">Enter Add on Details</div>
<div style="position:absolute;left:219px;top:528.3px;width:186.5px;height:17px;box-sizing:border-box;background:#fff;border:1px solid #c9c9c9;border-radius:3px;"></div>
<div style="position:absolute;left:226.5px;top:534.00px;font-size:7.9px;line-height:7.9px;color:#999;font-weight:400;white-space:nowrap;">Enter Add on name</div>
<div style="position:absolute;left:424.4px;top:528.3px;width:185.60000000000002px;height:17px;box-sizing:border-box;background:#fff;border:1px solid #c9c9c9;border-radius:3px;"></div>
<div style="position:absolute;left:431.5px;top:534.00px;font-size:7.9px;line-height:7.9px;color:#999;font-weight:400;white-space:nowrap;">Enter Add on Details</div>
</div>
<div style="position:absolute;left:1294px;top:134px;width:16px;height:557px;background:#f4f4f4;"></div>
<svg style="position:absolute;left:1296px;top:138px;" width="12" height="8" viewBox="0 0 12 8"><path d="M2 6.5 L6 2 L10 6.5 Z" fill="#505050"/></svg>
<div style="position:absolute;left:1296px;top:182px;width:12px;height:194.7px;background:#c1c1c1;"></div>
<svg style="position:absolute;left:1296px;top:679px;" width="12" height="8" viewBox="0 0 12 8"><path d="M2 1.5 L6 6 L10 1.5 Z" fill="#505050"/></svg>
<div style="position:absolute;left:56px;top:691.2px;width:1254px;height:36.59999999999991px;background:#1c2123;"></div>
<div style="position:absolute;left:416px;top:691.2px;width:137.8px;height:36.59999999999991px;background:linear-gradient(90deg,#3a3d3d,#303333);"></div>
<div style="position:absolute;left:597.6px;top:691.2px;width:707.4px;height:36.59999999999991px;background:linear-gradient(90deg,#262a2c,#1d2224 30%,#1a1f21);"></div>
<div style="position:absolute;left:56px;top:691.2px;width:44px;height:36.59999999999991px;background:#3a3a3a;"></div>
<svg style="position:absolute;left:70.5px;top:702.0px;" width="15" height="15" viewBox="0 0 15 15"><path d="M0 1.95 L5.65 0.90 V6.85 H0 Z" fill="#fff"/><path d="M6.95 0.60 L15 0.00 V6.85 H6.95 Z" fill="#fff"/><path d="M0 8.15 H5.65 V14.10 L0 13.05 Z" fill="#fff"/><path d="M6.95 8.15 H15 V15.00 L6.95 14.40 Z" fill="#fff"/></svg>
<div style="position:absolute;left:100px;top:691.2px;width:316px;height:36.59999999999991px;background:#f2f2f2;box-shadow:inset 0 1px 0 #d6d6d6;"></div>
<svg style="position:absolute;left:109px;top:700px;" width="18" height="18" viewBox="0 0 18 18"><circle cx="10.5" cy="7" r="5" fill="none" stroke="#111" stroke-width="1.4"/><path d="M7 10.6 L1.8 15.8" stroke="#111" stroke-width="1.5"/></svg>
<div style="position:absolute;left:137.4px;top:704.00px;font-size:13.3px;line-height:13.3px;color:#222;font-weight:400;white-space:nowrap;">Type here to search</div>
<div style="position:absolute;left:429.4px;top:698.2px;width:22.7px;height:22.8px;background:#fff;"></div>
<svg style="position:absolute;left:430px;top:699px;" width="22" height="22" viewBox="0 0 22 22"><circle cx="11" cy="11" r="9.6" fill="#0b4aa6"/><path d="M4.5 11.5 L9 5.5 L11 8 L13 5.5 L17.5 11.5 Z" fill="#fff"/><path d="M7.5 13.5 H14.5 M7.5 15.5 H14.5" stroke="#fff" stroke-width="1"/></svg>
<svg style="position:absolute;left:474px;top:697px;" width="24" height="24" viewBox="0 0 24 24"><path d="M4 12.5 Q4 4.5 12 4 Q20 4 20.5 12.8 H8.5 Q9 18 14.5 18 Q17.5 18 19.5 16.5 V20 Q17 21.5 13.5 21.5 Q4 21 4 12.5 Z M8.6 10 H16 Q15.6 6.8 12.3 6.8 Q9.4 6.8 8.6 10Z" fill="#1e8be8"/></svg>
<svg style="position:absolute;left:518px;top:698px;" width="24" height="22" viewBox="0 0 24 22"><path d="M2 3 H9 L11 5 H22 V19 H2 Z" fill="#e8b33a"/><path d="M2 7 H22 V19 H2 Z" fill="#f8d156"/><rect x="7.5" y="13" width="9" height="6" fill="#2a8bd6"/><rect x="10" y="16" width="4" height="3" fill="#f8d156"/></svg>
<div style="position:absolute;left:553.8px;top:691.2px;width:43.8px;height:36.59999999999991px;background:#4a4a4a;"></div>
<div style="position:absolute;left:596.6px;top:691.2px;width:1px;height:36.59999999999991px;background:#555;"></div>
<svg style="position:absolute;left:563.4px;top:697.5px;" width="22" height="22" viewBox="0 0 22 22"><path d="M11 11 L1.47 5.50 A11 11 0 0 1 20.53 5.50 Z" fill="#db4437"/><path d="M11 11 L20.53 5.50 A11 11 0 0 1 11.00 22.00 Z" fill="#ffcd40"/><path d="M11 11 L11.00 22.00 A11 11 0 0 1 1.47 5.50 Z" fill="#0f9d58"/><circle cx="11" cy="11" r="5.50" fill="#fff"/><circle cx="11" cy="11" r="4.29" fill="#4285f4"/></svg>
<div style="position:absolute;left:573.9px;top:707.5px;width:15px;height:15px;border-radius:8px;background:#4a3226;box-shadow:0 0 0 1px rgba(0,0,0,0.3);"></div>
<div style="position:absolute;left:281.4px;width:600px;text-align:center;top:711.00px;font-size:10px;line-height:10px;color:#fff;font-weight:400;white-space:nowrap;">j</div>
<svg style="position:absolute;left:608px;top:697px;" width="26" height="24" viewBox="0 0 26 24"><rect x="3" y="2" width="20" height="19" fill="#d9efc4" stroke="#5d9c3f" stroke-width="1"/><path d="M3 8 H23 M3 13 H23 M3 18 H23 M13 2 V21 M18 2 V21" stroke="#6aae47" stroke-width="0.9"/><rect x="4" y="6" width="10" height="10" fill="#e9f5dd"/><path d="M6 7.5 L11.5 14.5 M11.5 7.5 L6 14.5" stroke="#2d5f1a" stroke-width="2"/></svg>
<svg style="position:absolute;left:653.7px;top:697.5px;" width="23.0" height="23.0" viewBox="0 0 23.0 23.0"><g transform="scale(1.438)"><circle cx="8" cy="8" r="7.9" fill="#2f7ed8"/><rect x="3.8" y="4.2" width="8.4" height="6.6" fill="#fff"/><path d="M4.8 10 L11.2 5.2 V10 Z" fill="#2f7ed8"/><path d="M6.3 11.6 H9.7 L10.3 12.5 H5.7 Z" fill="#fff"/></g></svg>
<svg style="position:absolute;left:697px;top:698px;" width="26" height="22" viewBox="0 0 26 22"><path d="M3 6.5 L20 1.5 L23 3.5 L6 9 Z" fill="#8a959c"/><path d="M3.5 7 L20.5 2.2" stroke="#c8d2d8" stroke-width="1"/><path d="M2 10 H23 L24 13 Q24 16 21 16 H4 Q1.5 16 1.5 13 Z" fill="#5d666c"/><path d="M3 10.5 H22.5" stroke="#9fb6c4" stroke-width="1"/></svg>
<div style="position:absolute;left:512.3px;top:726px;width:36.700000000000045px;height:1.8px;background:#76b9ed;"></div>
<div style="position:absolute;left:553.8px;top:726px;width:43.80000000000007px;height:1.8px;background:#76b9ed;"></div>
<div style="position:absolute;left:602.4px;top:726px;width:37.10000000000002px;height:1.8px;background:#76b9ed;"></div>
<div style="position:absolute;left:647px;top:726px;width:36.700000000000045px;height:1.8px;background:#76b9ed;"></div>
<div style="position:absolute;left:692px;top:726px;width:37px;height:1.8px;background:#76b9ed;"></div>
<svg style="position:absolute;left:1124px;top:704px;" width="14" height="9" viewBox="0 0 14 9"><path d="M1.5 7.5 L7 2 L12.5 7.5" fill="none" stroke="#fff" stroke-width="1.3"/></svg>
<svg style="position:absolute;left:1144px;top:701px;" width="18" height="16" viewBox="0 0 18 16"><path d="M2 5.5 H5 L9 2 V14 L5 10.5 H2 Z" fill="none" stroke="#fff" stroke-width="1.1"/><path d="M11 5.5 Q12.5 8 11 10.5 M13 3.8 Q15.5 8 13 12.2 M15 2 Q18.5 8 15 14" fill="none" stroke="#fff" stroke-width="1.1"/></svg>
<div style="position:absolute;left:1169.4px;top:705.00px;font-size:10.8px;line-height:10.8px;color:#fff;font-weight:400;white-space:nowrap;">ENG</div>
<div style="position:absolute;left:929px;width:600px;text-align:center;top:697.00px;font-size:10.8px;line-height:10.8px;color:#fff;font-weight:400;white-space:nowrap;">05:20 PM</div>
<div style="position:absolute;left:929px;width:600px;text-align:center;top:713.00px;font-size:10.9px;line-height:10.9px;color:#fff;font-weight:400;white-space:nowrap;">21/11/2024</div>
<svg style="position:absolute;left:1270.5px;top:700px;" width="18" height="18" viewBox="0 0 18 18"><path d="M2 2.5 H16 V13 H11 L9 15.5 L7 13 H2 Z" fill="none" stroke="#fff" stroke-width="1.2" stroke-linejoin="round"/></svg>
<div style="position:absolute;left:1305px;top:691.2px;width:1px;height:36.59999999999991px;background:#555;"></div>
<div style="position:absolute;left:0px;top:727.8px;width:1366px;height:40.200000000000045px;background:linear-gradient(90deg,#1d221e 0%,#212822 48%,#2a2a22 66%,#2c2a22 74%,#22291f 82%,#1f2a23 100%);"></div>
<svg style="position:absolute;left:15.9px;top:739.9px;" width="16.2" height="16.2" viewBox="0 0 16.2 16.2"><path d="M0 2.11 L6.15 0.97 V7.45 H0 Z" fill="#fff"/><path d="M7.45 0.65 L16.2 0.00 V7.45 H7.45 Z" fill="#fff"/><path d="M0 8.75 H6.15 V15.23 L0 14.09 Z" fill="#fff"/><path d="M7.45 8.75 H16.2 V16.20 L7.45 15.55 Z" fill="#fff"/></svg>
<div style="position:absolute;left:48px;top:727.8px;width:288px;height:40.200000000000045px;background:#f0f0f0;box-shadow:inset 0 1px 0 #cfcfcf;"></div>
<svg style="position:absolute;left:58px;top:737px;" width="20" height="20" viewBox="0 0 20 20"><circle cx="12" cy="8.5" r="5.5" fill="none" stroke="#111" stroke-width="1.4"/><path d="M8.2 12.5 L2.5 18.2" stroke="#111" stroke-width="1.6"/></svg>
<div style="position:absolute;left:88.8px;top:742.00px;font-size:14.4px;line-height:14.4px;color:#222;font-weight:400;white-space:nowrap;">Type here to search</div>
<svg style="position:absolute;left:264px;top:733px;" width="64" height="30" viewBox="0 0 64 30"><path d="M24 2.5 Q25.8 11.5 36 13.8 Q25.8 16 24 25.5 Q22.2 16 12 13.8 Q22.2 11.5 24 2.5Z" fill="#f7b922"/><path d="M47 12 Q48 16.6 52.4 17.6 Q48 18.6 47 23.2 Q46 18.6 41.6 17.6 Q46 16.6 47 12Z" fill="#f6c22e"/><path d="M5 16.5 Q5.8 19.4 8.4 20.2 Q5.8 21 5 24 Q4.2 21 1.6 20.2 Q4.2 19.4 5 16.5Z" fill="#2f9ae8"/><circle cx="40.8" cy="4.4" r="1.7" fill="#e8602b"/><circle cx="59" cy="24" r="1.7" fill="#7cc242"/></svg>
<svg style="position:absolute;left:349px;top:739px;" width="20" height="17" viewBox="0 0 20 17"><rect x="2.5" y="3" width="11" height="11" fill="none" stroke="#fff" stroke-width="1.3"/><path d="M1 1 H15 M1 16 H15" stroke="#fff" stroke-width="1.3"/><path d="M17.5 1.5 V3.5 M17.5 6.5 V10.5 M17.5 13.5 V15.5" stroke="#fff" stroke-width="1.5"/></svg>
<svg style="position:absolute;left:399px;top:736.5px;" width="24" height="22" viewBox="0 0 24 22"><defs><linearGradient id="cpl" x1="0" y1="0" x2="0" y2="1"><stop offset="0" stop-color="#2a8ef0"/><stop offset="0.5" stop-color="#3cc8a0"/><stop offset="1" stop-color="#f8d81c"/></linearGradient><linearGradient id="cpr" x1="0" y1="0" x2="0" y2="1"><stop offset="0" stop-color="#b84cf0"/><stop offset="0.5" stop-color="#f0508a"/><stop offset="1" stop-color="#ff9a3a"/></linearGradient></defs><path d="M6 1 H13 Q15 1 14.4 3 L10.8 15 Q10.3 16.6 8.6 16.6 H2.4 Q0.6 16.6 1 14.8 L4.2 3 Q4.7 1 6 1Z" fill="url(#cpl)"/><path d="M4 15 H11 L9.6 20.4 Q9.2 21.4 7.8 21.4 H6 Q4.4 21.4 4.4 19.8Z" fill="#f25a3a"/><path d="M16 5.5 H21.4 Q23.2 5.5 22.8 7.4 L19.6 19.4 Q19.1 21.2 17.2 21.2 H10.6 Q8.8 21.2 9.3 19.4 L12.6 7.4 Q13.1 5.5 15 5.5Z" fill="url(#cpr)"/><path d="M12.6 1.2 Q14.6 1.2 15 4 L13 5.6 Q13.6 3.4 12.6 1.2Z" fill="#2452d8"/></svg>
<svg style="position:absolute;left:448px;top:735.5px;" width="24" height="25" viewBox="0 0 24 25"><defs><linearGradient id="edt" x1="0" y1="0" x2="1" y2="0.6"><stop offset="0" stop-color="#1fa8e8"/><stop offset="0.55" stop-color="#2ecdc0"/><stop offset="1" stop-color="#5ee04a"/></linearGradient><linearGradient id="edb" x1="0" y1="0" x2="0.6" y2="1"><stop offset="0" stop-color="#2aa0f0"/><stop offset="1" stop-color="#1462c0"/></linearGradient></defs><circle cx="12" cy="12.2" r="11.8" fill="url(#edt)"/><path d="M1.2 12 Q1.5 6.5 8 6.2 Q13.5 6.2 15 10.5 Q12 9.5 10.5 11.5 Q8.5 15.5 12.5 19 Q16 21.5 20.5 19.5 Q17.5 24 12 24 Q1 23.5 1.2 12Z" fill="url(#edb)"/><circle cx="14.2" cy="11.4" r="2.4" fill="#1c231e"/></svg>
<svg style="position:absolute;left:496.7px;top:737px;" width="24" height="22" viewBox="0 0 24 22"><path d="M2 3 H9 L11 5 H22 V19 H2 Z" fill="#e8b33a"/><path d="M2 7 H22 V19 H2 Z" fill="#f8d156"/><rect x="7.5" y="13" width="9" height="6" fill="#2a8bd6"/><rect x="10" y="16" width="4" height="3" fill="#f8d156"/></svg>
<svg style="position:absolute;left:545px;top:736px;" width="24" height="24" viewBox="0 0 24 24"><path d="M2 7 H22 V20 Q22 22 20 22 H4 Q2 22 2 20 Z" fill="#f4f4f4"/><path d="M7 7 Q7 2 12 2 Q17 2 17 7" fill="none" stroke="#3db0e8" stroke-width="1.6"/><rect x="8" y="10" width="3.5" height="3.5" fill="#f25022"/><rect x="12.5" y="10" width="3.5" height="3.5" fill="#7fba00"/><rect x="8" y="14.5" width="3.5" height="3.5" fill="#00a4ef"/><rect x="12.5" y="14.5" width="3.5" height="3.5" fill="#ffb900"/></svg>
<svg style="position:absolute;left:595px;top:736px;" width="24" height="24" viewBox="0 0 24 24"><rect x="8" y="4" width="15" height="17" rx="2" fill="#28a8ea"/><path d="M8 12 L23 12 L23 21 H10 Q8 21 8 19Z" fill="#0a64ad"/><rect x="1" y="6" width="13" height="13" rx="1.5" fill="#0f6cbd"/><ellipse cx="7.5" cy="12.5" rx="3.3" ry="4" fill="none" stroke="#fff" stroke-width="1.8"/></svg>
<svg style="position:absolute;left:644.5px;top:736.5px;" width="23.0" height="23.0" viewBox="0 0 23.0 23.0"><path d="M11.5 11.5 L1.54 5.75 A11.5 11.5 0 0 1 21.46 5.75 Z" fill="#db4437"/><path d="M11.5 11.5 L21.46 5.75 A11.5 11.5 0 0 1 11.50 23.00 Z" fill="#ffcd40"/><path d="M11.5 11.5 L11.50 23.00 A11.5 11.5 0 0 1 1.54 5.75 Z" fill="#0f9d58"/><circle cx="11.5" cy="11.5" r="5.75" fill="#fff"/><circle cx="11.5" cy="11.5" r="4.49" fill="#4285f4"/></svg>
<div style="position:absolute;left:655.5px;top:747.0px;width:15px;height:15px;border-radius:8px;background:#4a3a2e;box-shadow:0 0 0 1px rgba(0,0,0,0.3);"></div>
<div style="position:absolute;left:363px;width:600px;text-align:center;top:751.00px;font-size:10px;line-height:10px;color:#fff;font-weight:400;white-space:nowrap;">s</div>
<svg style="position:absolute;left:692px;top:735px;" width="26" height="26" viewBox="0 0 26 26"><defs><linearGradient id="ffg" x1="0.9" y1="0" x2="0.1" y2="1"><stop offset="0" stop-color="#ffd43a"/><stop offset="0.45" stop-color="#ff7a1a"/><stop offset="1" stop-color="#f0306a"/></linearGradient><linearGradient id="ffp" x1="0" y1="0" x2="1" y2="1"><stop offset="0" stop-color="#9a3ff0"/><stop offset="1" stop-color="#5a2ad0"/></linearGradient></defs><path d="M14 1.5 Q23 6 23.5 14 Q23.5 23.5 13 24 Q2.5 24 2 14 Q2 9 5 6 Q5 9 7 10 Q8 6 11 5 Q10.5 3 14 1.5Z" fill="url(#ffg)"/><circle cx="12" cy="13.5" r="5" fill="url(#ffp)"/><path d="M8 9 Q12 7 15.5 9.5 Q13 9 11 10.5Z" fill="#ff8a2a"/></svg>
<svg style="position:absolute;left:741.5px;top:736px;" width="25" height="24" viewBox="0 0 25 24"><rect x="0.5" y="0" width="24" height="24" rx="2" fill="#f27b2a"/><rect x="2" y="1" width="21" height="1" fill="#f9a36a"/><path d="M6.5 7.5 Q9 4.5 12.5 7 Q16 4.5 18.5 7.5 Q20.5 10 17.8 12.2 Q20.5 14.5 18.5 17 Q16 19.8 12.5 17.2 Q9 19.8 6.5 17 Q4.5 14.5 7.2 12.2 Q4.5 10 6.5 7.5Z" fill="none" stroke="#fff" stroke-width="2.6"/></svg>
<svg style="position:absolute;left:790px;top:735px;" width="25" height="26" viewBox="0 0 25 26"><defs><linearGradient id="npg" x1="0" y1="0" x2="0" y2="1"><stop offset="0" stop-color="#f4f8ee"/><stop offset="0.45" stop-color="#d8ecc0"/><stop offset="1" stop-color="#5cc040"/></linearGradient></defs><path d="M2.5 1.5 H15 L19.5 6 V24 H2.5 Z" fill="url(#npg)" stroke="#cfd8c8" stroke-width="0.8"/><path d="M6 7 V16 M6 7.5 Q8.5 6 8.5 9 V12" fill="none" stroke="#1a2a10" stroke-width="1.3"/><path d="M10 11.5 H12 M13.5 11.5 H15.5" stroke="#1a2a10" stroke-width="1.2"/><path d="M13 20 L23 2" stroke="#e8b020" stroke-width="2.4"/><path d="M22 1 L24 2.2" stroke="#c04020" stroke-width="2"/></svg>
<div style="position:absolute;left:828.4px;top:727.8px;width:43.6px;height:40.200000000000045px;background:#4f4f4b;"></div>
<svg style="position:absolute;left:839.5px;top:736px;" width="24" height="24" viewBox="0 0 24 24"><g transform="scale(1.500)"><circle cx="8" cy="8" r="7.9" fill="#2f7ed8"/><rect x="3.8" y="4.2" width="8.4" height="6.6" fill="#fff"/><path d="M4.8 10 L11.2 5.2 V10 Z" fill="#2f7ed8"/><path d="M6.3 11.6 H9.7 L10.3 12.5 H5.7 Z" fill="#fff"/></g></svg>
<svg style="position:absolute;left:889px;top:736px;" width="24" height="24" viewBox="0 0 24 24"><path d="M17 1.5 L22.5 4 V20 L17 22.5 L6.5 13 L2.5 16 L1 15 V9 L2.5 8 L6.5 11 Z M17 7 L10 12 L17 17 Z" fill="#1f9cf0"/><path d="M17 1.5 L22.5 4 V20 L17 22.5Z" fill="#0a7ad0"/></svg>
<div style="position:absolute;left:489.4px;top:766px;width:39.30000000000007px;height:2px;background:#76b9ed;"></div>
<div style="position:absolute;left:636.5px;top:766px;width:38.89999999999998px;height:2px;background:#76b9ed;"></div>
<div style="position:absolute;left:782.5px;top:766px;width:40.39999999999998px;height:2px;background:#76b9ed;"></div>
<div style="position:absolute;left:828.4px;top:766px;width:43.60000000000002px;height:2px;background:#76b9ed;"></div>
<div style="position:absolute;left:881px;top:766px;width:32px;height:2px;background:#76b9ed;"></div>
<svg style="position:absolute;left:1034px;top:735px;" width="28" height="26" viewBox="0 0 28 26"><defs><linearGradient id="wsg" x1="0" y1="0" x2="0" y2="1"><stop offset="0" stop-color="#f8c83a"/><stop offset="1" stop-color="#ee8a1c"/></linearGradient></defs><circle cx="13" cy="13" r="10" fill="url(#wsg)"/><path d="M10 7.6 H25 M6 11.2 H22.5 M3 14.8 H20 M7 18.4 H17" stroke="#f6dca0" stroke-width="1.5" opacity="0.9"/></svg>
<div style="position:absolute;left:1068px;top:743.00px;font-size:13.2px;line-height:13.2px;color:#fff;font-weight:400;white-space:nowrap;">30°C</div>
<svg style="position:absolute;left:1121px;top:743px;" width="15" height="9" viewBox="0 0 15 9"><path d="M1.5 8 L7.5 2 L13.5 8" fill="none" stroke="#fff" stroke-width="1.3"/></svg>
<svg style="position:absolute;left:1145px;top:739.5px;" width="17" height="17" viewBox="0 0 17 17"><rect x="0.5" y="0.5" width="16" height="16" fill="#2a3aa0" stroke="#c22" stroke-width="1"/><path d="M4 14 L11 4 L13 14 Z" fill="#d2222a"/><circle cx="4.5" cy="4.5" r="2" fill="#f8e020"/></svg>
<svg style="position:absolute;left:1168px;top:740px;" width="18" height="16" viewBox="0 0 18 16"><path d="M2 5.5 H5 L9 2 V14 L5 10.5 H2 Z" fill="none" stroke="#fff" stroke-width="1.1"/><path d="M11 5.5 Q12.5 8 11 10.5 M13 3.8 Q15.5 8 13 12.2 M15 2 Q18.5 8 15 14" fill="none" stroke="#fff" stroke-width="1.1"/></svg>
<svg style="position:absolute;left:1192px;top:739px;" width="18" height="18" viewBox="0 0 18 18"><rect x="3" y="5" width="9" height="9" rx="2.5" fill="none" stroke="#fff" stroke-width="1.2"/><path d="M12 8 L15.5 6 V13 L12 11" fill="none" stroke="#fff" stroke-width="1.2"/><path d="M3 3 Q7 0 11 3 M3 16 Q7 19 11 16" fill="none" stroke="#fff" stroke-width="1"/></svg>
<div style="position:absolute;left:930.3px;width:600px;text-align:center;top:734.00px;font-size:11.6px;line-height:11.6px;color:#fff;font-weight:400;white-space:nowrap;">ENG</div>
<div style="position:absolute;left:930.5999999999999px;width:600px;text-align:center;top:751.00px;font-size:11.6px;line-height:11.6px;color:#fff;font-weight:400;white-space:nowrap;">US</div>
<div style="position:absolute;left:980.5px;width:600px;text-align:center;top:735.00px;font-size:11.9px;line-height:11.9px;color:#fff;font-weight:400;white-space:nowrap;">4:11 PM</div>
<div style="position:absolute;left:981px;width:600px;text-align:center;top:752.00px;font-size:11.9px;line-height:11.9px;color:#fff;font-weight:400;white-space:nowrap;">11/21/2024</div>
<svg style="position:absolute;left:1323px;top:738px;" width="20" height="20" viewBox="0 0 20 20"><path d="M2 2.5 H18 V14.5 H12.5 L10 17.5 L7.5 14.5 H2 Z" fill="none" stroke="#fff" stroke-width="1.3" stroke-linejoin="round"/></svg>
<div style="position:absolute;left:1362px;top:727.8px;width:1px;height:40.200000000000045px;background:#555;"></div>
<svg style="position:absolute;left:1286px;top:390px;" width="24" height="62" viewBox="0 0 24 62"><path d="M0.5 0.5 H24 V61.5 L0.5 38.5 Z" fill="#f0f0f0" stroke="#8a8a8a" stroke-width="1"/><defs><linearGradient id="chg" x1="0" y1="0" x2="0" y2="1"><stop offset="0" stop-color="#5ab0e0"/><stop offset="1" stop-color="#1f74b0"/></linearGradient></defs><path d="M12.6 9.4 H18.8 L13.4 18 L18.8 26.6 H12.6 L6.8 18 Z" fill="url(#chg)"/><path d="M4 27.8 H21" stroke="#888" stroke-width="1.2" opacity="0.55"/></svg>
<svg style="position:absolute;left:1340px;top:400px;" width="26" height="68" viewBox="0 0 26 68"><path d="M0 0 H26 V67.5 L0 41.5 Z" fill="#eeeeee"/><path d="M13.6 10.5 H20.2 L14.4 19.2 L20.2 28 H13.6 L7.6 19.2 Z" fill="url(#chg)"/><path d="M5 29.2 H23" stroke="#888" stroke-width="1.2" opacity="0.55"/></svg>
</body></html>
